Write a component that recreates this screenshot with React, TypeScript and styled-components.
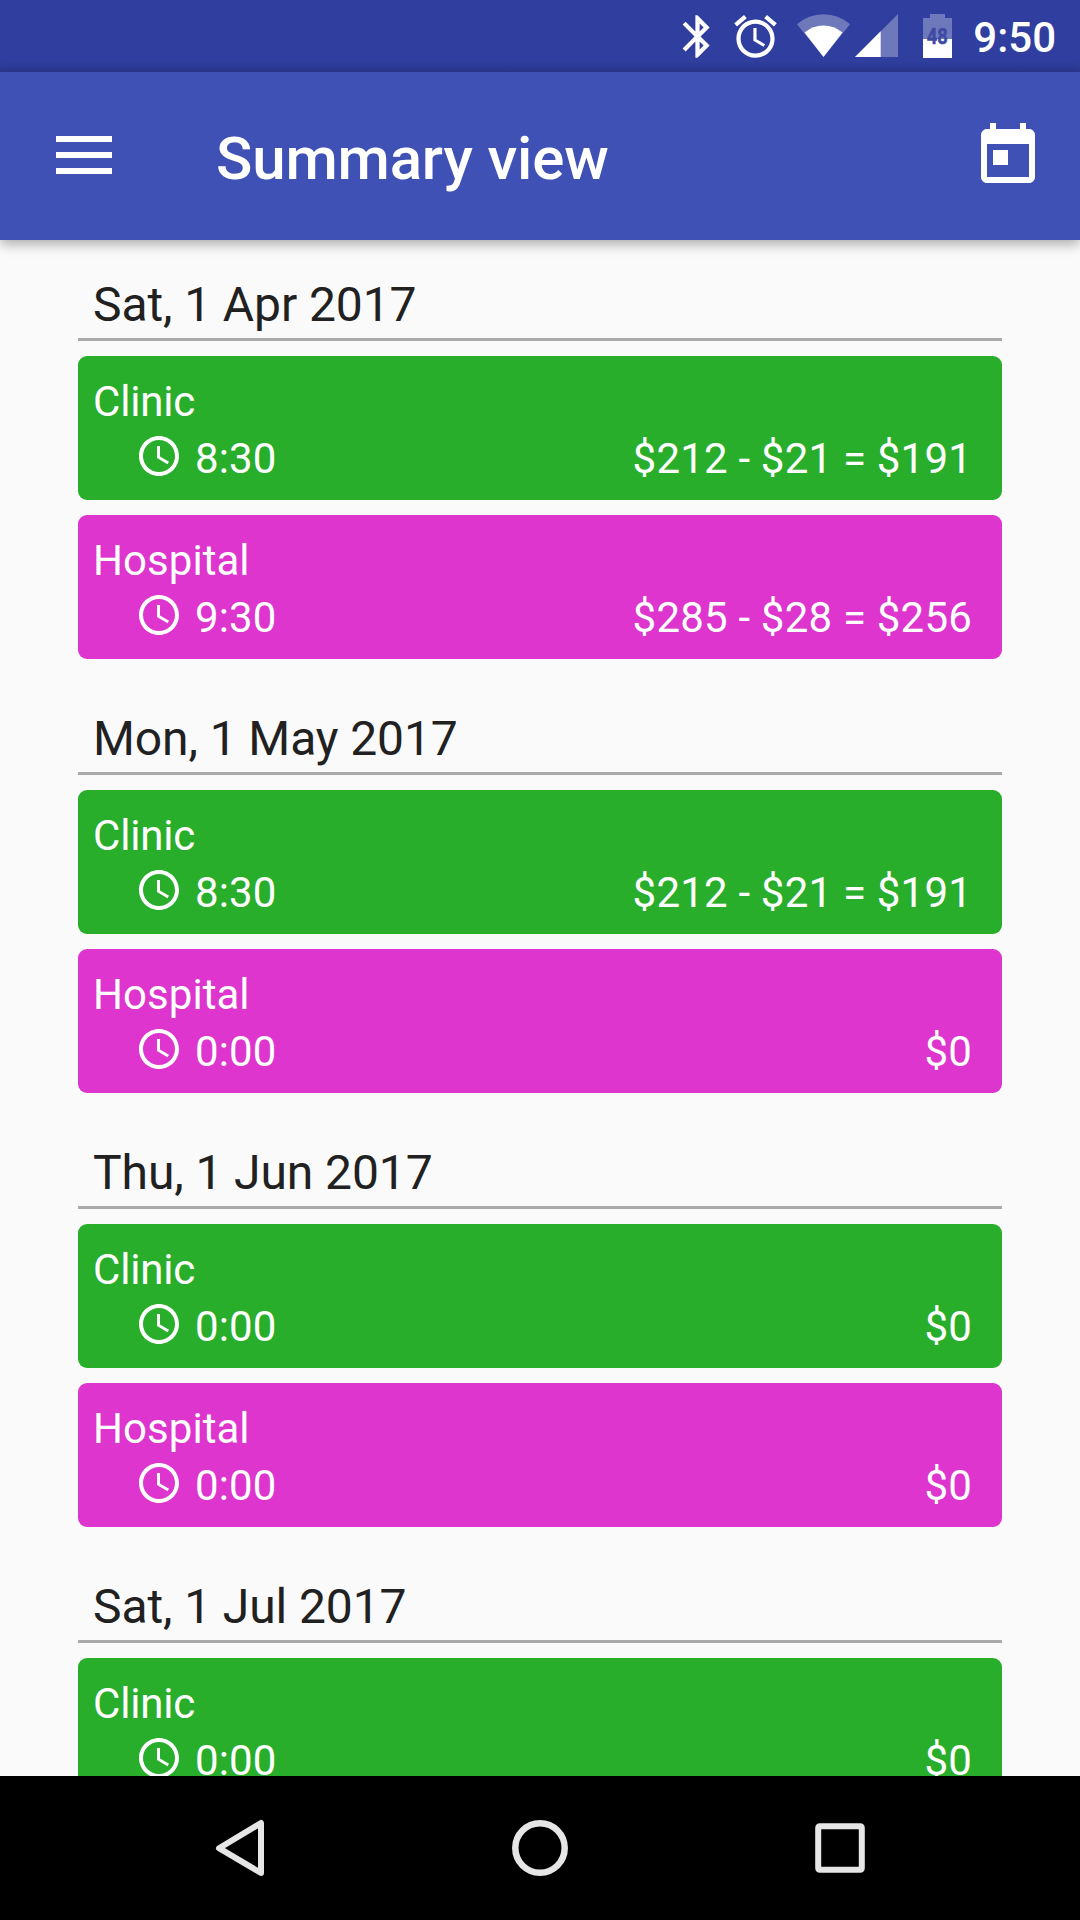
import React from "react";
import styled, { createGlobalStyle } from "styled-components";

const GlobalStyle = createGlobalStyle`
  * { box-sizing: border-box; }
  body { margin: 0; font-family: Roboto, "Liberation Sans", sans-serif; }
  svg { display: block; flex: none; }
`;

const Screen = styled.div`
  display: flex;
  flex-direction: column;
  width: 1080px;
  height: 1920px;
  overflow: hidden;
  background: #fafafa;
`;

const StatusBar = styled.div`
  display: flex;
  align-items: flex-start;
  flex: none;
  height: 72px;
  padding: 11px 24px 0 672px;
  color: #fff;
  background: linear-gradient(#303f9f 0 84%, #2c3991 100%);
`;

const StatusClock = styled.span`
  margin: 1px 0 0 auto;
  font-size: 42px;
  font-weight: 500;
  line-height: 52px;
`;

const AppBar = styled.header`
  display: flex;
  align-items: center;
  flex: none;
  height: 168px;
  padding: 0 36px 0 56px;
  color: #fff;
  background: #3f51b5;
  box-shadow: 0 4px 12px rgba(0, 0, 0, 0.33);
  z-index: 1;
`;

const MenuSvg = styled.svg`
  margin-bottom: 2px;
`;

const Title = styled.h1`
  flex: 1;
  margin: 5px 0 0 104px;
  font-size: 60px;
  font-weight: 500;
  letter-spacing: -0.15px;
  line-height: 72px;
`;

const List = styled.main`
  flex: 1;
  min-height: 0;
  overflow: hidden;
  padding: 0 78px;
`;

const Month = styled.section`
  display: flex;
  flex-direction: column;
  gap: 15px;
  padding-bottom: 15px;
`;

const MonthTitle = styled.h2`
  height: 101px;
  margin: 0;
  padding: 36px 15px 0;
  border-bottom: 3px solid #aaa;
  color: #212121;
  font-size: 48px;
  font-weight: 400;
  letter-spacing: -0.1px;
  line-height: 58px;
`;

const Card = styled.article<{ $color: string }>`
  height: 144px;
  padding: 17px 30px 0 15px;
  border-radius: 9px;
  color: #fff;
  background: ${(p) => p.$color};
  font-size: 42px;
  line-height: 57px;
`;

const CardName = styled.div<{ $tracking: number }>`
  letter-spacing: ${(p) => p.$tracking}px;
`;

const CardRow = styled.div`
  display: flex;
  padding-left: 42px;
`;

const Duration = styled.span`
  flex: 1;
  margin-left: 12px;
  letter-spacing: 0.15px;
`;

const Amount = styled.span`
  letter-spacing: 0.2px;
`;

const NavBar = styled.nav`
  display: flex;
  justify-content: center;
  align-items: center;
  gap: 228px;
  flex: none;
  height: 144px;
  background: #000;
`;

const GREEN = "#29ae2b";
const PINK = "#dd35cd";

const months = [
  { title: "Sat, 1 Apr 2017", clinic: ["8:30", "$212 - $21 = $191"], hospital: ["9:30", "$285 - $28 = $256"] },
  { title: "Mon, 1 May 2017", clinic: ["8:30", "$212 - $21 = $191"], hospital: ["0:00", "$0"] },
  { title: "Thu, 1 Jun 2017", clinic: ["0:00", "$0"], hospital: ["0:00", "$0"] },
  { title: "Sat, 1 Jul 2017", clinic: ["0:00", "$0"], hospital: ["0:00", "$0"] },
];

const ClockSvg = styled.svg`
  margin-top: 2px;
`;

const ClockIcon = () => (
  <ClockSvg width="48" height="48" viewBox="0 0 24 24" fill="#fff">
    <path d="M11.99 2C6.47 2 2 6.48 2 12s4.47 10 9.99 10C17.52 22 22 17.52 22 12S17.52 2 11.99 2zM12 20c-4.42 0-8-3.58-8-8s3.58-8 8-8 8 3.58 8 8-3.58 8-8 8zm.5-13H11v6l5.25 3.15.75-1.23-4.5-2.67z" />
  </ClockSvg>
);

interface EntryProps {
  name: string;
  color: string;
  tracking: number;
  values: string[];
}

function Entry({ name, color, tracking, values }: EntryProps) {
  return (
    <Card $color={color}>
      <CardName $tracking={tracking}>{name}</CardName>
      <CardRow>
        <ClockIcon />
        <Duration>{values[0]}</Duration>
        <Amount>{values[1]}</Amount>
      </CardRow>
    </Card>
  );
}

const BluetoothIcon = () => (
  <svg width="51" height="51" viewBox="0 0 24 24" fill="#fff">
    <path d="M17.71 7.71L12 2h-1v7.59L6.41 5 5 6.41 10.59 12 5 17.59 6.41 19 11 14.41V22h1l5.71-5.71-4.3-4.29 4.3-4.29zM13 5.83l1.88 1.88L13 9.59V5.83zm1.88 10.46L13 18.17v-3.76l1.88 1.88z" />
  </svg>
);

const AlarmSvg = styled.svg`
  margin-left: 7px;
`;

const SignalSvg = styled.svg`
  margin: 1px 0 0 14px;
`;

const BatterySvg = styled.svg`
  margin: 3px 0 0 23px;
`;

export default function App() {
  return (
    <>
      <GlobalStyle />
      <Screen>
        <StatusBar>
          <BluetoothIcon />
          <AlarmSvg width="51" height="51" viewBox="0 0 24 24" fill="#fff">
            <path d="M22 5.72l-4.6-3.86-1.29 1.53 4.6 3.86L22 5.72zM7.88 3.39L6.6 1.86 2 5.71l1.29 1.53 4.59-3.85zM12.5 8H11v6l4.75 2.85.75-1.23-4-2.37V8zM12 4c-4.97 0-9 4.03-9 9s4.02 9 9 9c4.97 0 9-4.03 9-9s-4.03-9-9-9zm0 16c-3.87 0-7-3.13-7-7s3.13-7 7-7 7 3.13 7 7-3.13 7-7 7z" />
          </AlarmSvg>
          <SignalSvg width="105" height="48" viewBox="795 12 105 48">
            <path d="M823.5 57L797 24.2Q808.5 14.2 823.5 14.2T850 24.2Z" fill="#fff" fillOpacity=".3" />
            <path d="M823.5 57L804.5 32.500Q813 25.500 823.5 25.500T842.500 32.500Z" fill="#fff" />
            <path d="M855 57L898 14V57Z" fill="#fff" fillOpacity=".3" />
            <path d="M855 57L880.7 31.3V57Z" fill="#fff" />
          </SignalSvg>
          <BatterySvg width="29" height="44" viewBox="923 14 29 44">
            <path d="M923 18h7v-4h15v4h7v21h-29z" fill="#fff" fillOpacity=".3" />
            <path d="M923 39h29v19h-29z" fill="#fff" />
            <text
              x="926.8"
              y="44"
              fontSize="22"
              fontWeight="700"
              fill="#3d4aa3"
              stroke="#3d4aa3"
              strokeWidth=".5"
              textLength="21"
              lengthAdjust="spacingAndGlyphs"
            >
              48
            </text>
          </BatterySvg>
          <StatusClock>9:50</StatusClock>
        </StatusBar>
        <AppBar>
          <MenuSvg width="56" height="38" viewBox="0 0 56 38" fill="#fff">
            <path d="M0 0h56v6H0zM0 16h56v6H0zM0 32h56v6H0z" />
          </MenuSvg>
          <Title>Summary view</Title>
          <svg width="72" height="72" viewBox="0 0 24 24" fill="#fff">
            <path d="M19 3h-1V1h-2v2H8V1H6v2H5c-1.11 0-1.99.9-1.99 2L3 19c0 1.1.89 2 2 2h14c1.1 0 2-.9 2-2V5c0-1.1-.9-2-2-2zm0 16H5V8h14v11zM7 10h5v5H7z" />
          </svg>
        </AppBar>
        <List>
          {months.map((m) => (
            <Month key={m.title}>
              <MonthTitle>{m.title}</MonthTitle>
              <Entry name="Clinic" color={GREEN} tracking={-0.2} values={m.clinic} />
              <Entry name="Hospital" color={PINK} tracking={0.05} values={m.hospital} />
            </Month>
          ))}
        </List>
        <NavBar>
          <svg width="72" height="72" viewBox="204 1812 72 72" fill="none" stroke="#e6e6e6" strokeWidth="6" strokeLinejoin="round">
            <path d="M261 1823V1873L219 1848.2Z" />
          </svg>
          <svg width="72" height="72" viewBox="504 1812 72 72" fill="none" stroke="#e6e6e6" strokeWidth="6.5">
            <circle cx="540" cy="1848" r="24.7" />
          </svg>
          <svg width="72" height="72" viewBox="804 1812 72 72" fill="none" stroke="#e6e6e6" strokeWidth="6">
            <rect x="818.2" y="1826.2" width="43.6" height="43.6" rx="1.5" />
          </svg>
        </NavBar>
      </Screen>
    </>
  );
}
